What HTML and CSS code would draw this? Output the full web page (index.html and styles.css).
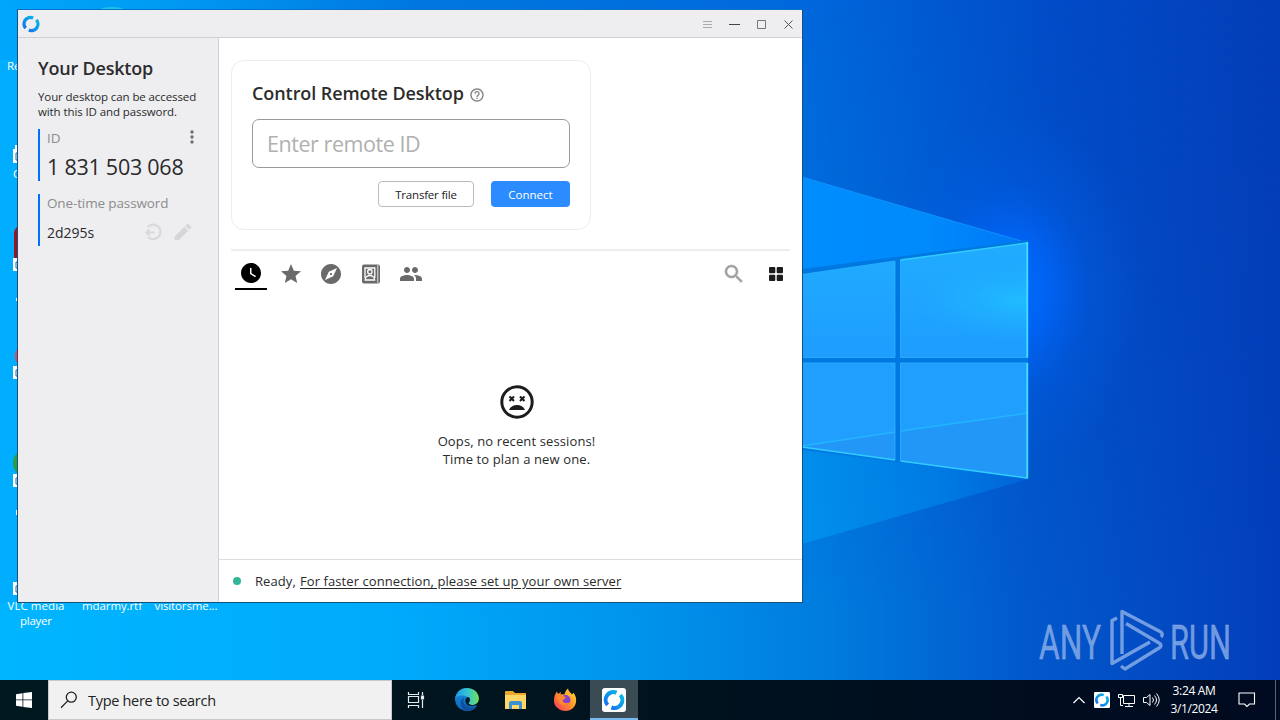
FILE: index.html
```html
<!DOCTYPE html>
<html lang="en">
<head>
<meta charset="utf-8">
<title>Desktop</title>
<link rel="stylesheet" href="styles.css">
</head>
<body>
<div class="desktop">
  <svg class="wallpaper" viewBox="0 0 1280 680" preserveAspectRatio="none">
    <defs>
      <linearGradient id="sky" x1="0" y1="0" x2="1" y2="0"><stop offset="0" stop-color="#00a6fb"/><stop offset=".12" stop-color="#009cf4"/><stop offset=".32" stop-color="#0078e0"/><stop offset=".63" stop-color="#0068dc"/><stop offset=".82" stop-color="#024cc8"/><stop offset="1" stop-color="#043eb8"/></linearGradient>
      <linearGradient id="floor" x1="0" y1="0" x2="1" y2="0"><stop offset="0" stop-color="#00b5ff"/><stop offset=".3" stop-color="#00abfc"/><stop offset=".5" stop-color="#0094ec"/><stop offset=".65" stop-color="#007bde"/><stop offset=".8" stop-color="#0259cc"/><stop offset="1" stop-color="#033eba"/></linearGradient>
      <linearGradient id="fade" x1="0" y1="0" x2="0" y2="1"><stop offset="0" stop-color="#000"/><stop offset=".3" stop-color="#333"/><stop offset=".9" stop-color="#fff"/></linearGradient>
      <mask id="low"><rect width="1280" height="680" fill="url(#fade)"/></mask>
      <radialGradient id="glow" gradientUnits="userSpaceOnUse" cx="1010" cy="290" r="180" gradientTransform="translate(1010 290) scale(.75 1) translate(-1010 -290)"><stop offset="0" stop-color="#006cff"/><stop offset=".3" stop-color="#0066fa" stop-opacity=".8"/><stop offset=".6" stop-color="#0060ec" stop-opacity=".3"/><stop offset="1" stop-color="#005ee8" stop-opacity="0"/></radialGradient>
      <linearGradient id="beam" gradientUnits="userSpaceOnUse" x1="802" y1="0" x2="1028" y2="0"><stop offset="0" stop-color="#008dfd"/><stop offset=".55" stop-color="#008afb"/><stop offset="1" stop-color="#0076f6"/></linearGradient>
      <linearGradient id="beamlow" gradientUnits="userSpaceOnUse" x1="802" y1="500" x2="1028" y2="470"><stop offset="0" stop-color="#008fec"/><stop offset=".6" stop-color="#007be3"/><stop offset="1" stop-color="#0064d8"/></linearGradient>
      <linearGradient id="pane" x1="0" y1="0" x2="0" y2="1"><stop offset="0" stop-color="#20acff"/><stop offset="1" stop-color="#1e9dff"/></linearGradient>
      <radialGradient id="shine" gradientUnits="userSpaceOnUse" cx="1020" cy="300" r="80" gradientTransform="translate(1020 300) scale(1.3 .5) translate(-1020 -300)"><stop offset="0" stop-color="#20bcff"/><stop offset="1" stop-color="#20b0ff" stop-opacity="0"/></radialGradient>
    </defs>
    <rect width="1280" height="680" fill="url(#sky)"/>
    <rect width="1280" height="680" fill="url(#floor)" mask="url(#low)"/>
    <rect width="18" height="543" y="60" fill="#00adff"/>
    <rect x="802" y="60" width="478" height="460" fill="url(#glow)"/>
    <path d="M802 177L1028 243V360H802z" fill="url(#beam)"/>
    <path d="M802 360H1028V479L802 544z" fill="url(#beamlow)"/>
    <path d="M802 177L1028 243" stroke="#159cff" stroke-opacity=".7" fill="none"/>
    <path d="M802 269L1028 240V479L802 450z" fill="#0078e2"/>
    <path d="M802 274.500L895 261V357.500H802zM900.500 260L1028 243V357.500H900.500z" fill="url(#pane)"/>
    <path d="M900.500 260L1028 243V357.500H900.500z" fill="url(#shine)"/>
    <path d="M802 363H895V460L802 447zM900.500 363H1028V478L900.500 461z" fill="#209fff"/>
    <path d="M802 446L895 432V460L802 447zM900.500 431L1028 413V478L900.500 461z" fill="#2397f7"/>
    <path d="M802 446L895 432M900.500 431L1028 413" stroke="#23b5ff" stroke-width="1.500"/>
    <path d="M802 274.500L895 261V357.500H802M900.500 357.500V260M895 363V460M802 363H895M900.500 461V363H1028M900.500 357.500H1028" fill="none" stroke="#2bb2ff" stroke-width=".8"/>
    <path d="M900.500 260L1027 243M802 447L895 460M900.500 461L1027 478" stroke="#30ccff" stroke-width="1.500"/>
    <path d="M1027.300 242V357.500M1027.300 363V478.500" stroke="#42e2ff" stroke-width="1.800"/>
    <path d="M1117 618L1112 620.500V663.500L1150 642M1161 637Q1164 634 1160 631.500L1122 611.500V654M1126 623.500L1159 643Q1163 645.500 1159 648L1125 669L1121 666" fill="none" stroke="#8fb1ea" stroke-opacity=".8" stroke-width="3.400" stroke-linejoin="round"/>
    <g class="watermark-text" fill="#8fb1ea" fill-opacity=".8" stroke="#8fb1ea" stroke-opacity=".5" stroke-width=".8">
      <text x="1039" y="659" textLength="62" lengthAdjust="spacingAndGlyphs">ANY</text>
      <text x="1170" y="659" textLength="61" lengthAdjust="spacingAndGlyphs">RUN</text>
    </g>
    <ellipse cx="112" cy="15" rx="18" ry="8" fill="#20c5df"/><ellipse cx="260" cy="14" rx="17" ry="5" fill="#438eb5"/>
    <path d="M18 226Q14 229 14 234V259H18z" fill="#9b1422"/>
    <circle cx="28" cy="356" r="13" fill="#ee4455"/><circle cx="27" cy="463" r="14" fill="#2c9d45"/>
    <g fill="#fff"><path d="M13 149H18V163H13zM13 258H18V271H13zM13 366H18V379H13zM13 474H18V487H13zM13 582H18V595H13z"/><path d="M16 298h2v3h-2zM16 510h2v5h-2zM15 145h3v4h-3z"/></g>
    <path d="M18 153h-2v7h2M18 262h-2v6h2M18 370h-2v6h2M18 478h-2v6h2M18 586h-2v6h2" fill="none" stroke="#236aa3"/>
    <g class="icon-label" fill="#fff">
      <text x="7" y="70">Re</text><text x="13" y="178">C</text>
      <text x="36" y="610" text-anchor="middle" textLength="57">VLC media</text><text x="36" y="625" text-anchor="middle" textLength="32">player</text>
      <text x="112" y="610" text-anchor="middle" textLength="60">mdarmy.rtf</text><text x="186" y="610" text-anchor="middle" textLength="63">visitorsme...</text>
    </g>
  </svg>

  <div class="window">
    <header class="titlebar">
      <svg class="app-logo" viewBox="0 0 24 24"><use href="#ring"/></svg>
      <svg class="caption" viewBox="0 0 100 28" fill="none" stroke="#777">
        <path d="M5 11.500h9M5 14.500h9M5 17.500h9" stroke="#aaa"/><path d="M31 14.500h11" stroke="#444"/><path d="M59.500 10.500h8v8h-8z" stroke="#777"/><path d="M86.500 10.500l8 8M94.500 10.500l-8 8" stroke="#555"/>
      </svg>
    </header>
    <div class="body">
      <aside class="sidebar">
        <h2 class="heading side-heading">Your Desktop</h2>
        <p class="hint">Your desktop can be accessed<br>with this ID and password.</p>
        <section class="field">
          <div class="field-head"><span class="label">ID</span><svg class="more" viewBox="0 0 6 16" fill="#707070"><circle cx="3" cy="3" r="1.700"/><circle cx="3" cy="8" r="1.700"/><circle cx="3" cy="13" r="1.700"/></svg></div>
          <div class="id-value">1 831 503 068</div>
        </section>
        <section class="field">
          <div class="field-head"><span class="label">One-time password</span></div>
          <div class="password"><span class="pw-text">2d295s</span>
            <svg class="tool" viewBox="0 0 20 20"><path d="M4.500 5.300A7.300 7.300 0 1 1 5 15M3.500 10.500H11.500M6.500 7.500l-3 3 3 3" fill="none" stroke="#d9d9dc" stroke-width="2.200"/></svg>
            <svg class="tool" viewBox="0 0 24 24" fill="#d6d6d9"><path d="M2 17.250V22h4.750L18.310 10.440l-4.750-4.750zM21.710 7.040c.39-.39.39-1.020 0-1.410l-3.340-3.340c-.39-.39-1.020-.39-1.410 0l-2.330 2.330 4.750 4.750z"/></svg>
          </div>
        </section>
      </aside>
      <main class="main">
        <div class="content">
          <section class="card">
            <h2 class="heading card-heading"><span>Control Remote Desktop</span><svg class="help" viewBox="0 0 24 24" fill="#808080"><path d="M11 18h2v-2h-2v2zm1-16C6.480 2 2 6.480 2 12s4.480 10 10 10 10-4.480 10-10S17.520 2 12 2zm0 18c-4.410 0-8-3.590-8-8s3.590-8 8-8 8 3.590 8 8-3.590 8-8 8zm0-14c-2.210 0-4 1.790-4 4h2c0-1.100.9-2 2-2s2 .9 2 2c0 2-3 1.750-3 5h2c0-2.250 3-2.500 3-5 0-2.210-1.790-4-4-4z"/></svg></h2>
            <div class="input"><span>Enter remote ID</span></div>
            <div class="actions"><button class="btn transfer">Transfer file</button><button class="btn connect">Connect</button></div>
          </section>
          <nav class="tabs">
            <span class="tab active"><svg viewBox="0 0 24 24"><path d="M12 2C6.500 2 2 6.500 2 12s4.500 10 10 10 10-4.500 10-10S17.500 2 12 2zm4.200 14.200L11 13V7h1.500v5.200l4.500 2.700-.8 1.300z"/></svg></span>
            <span class="tab"><svg viewBox="0 0 24 24"><path d="M12 17.270L18.180 21l-1.640-7.030L22 9.240l-7.190-.61L12 2 9.190 8.630 2 9.240l5.460 4.730L5.820 21z"/></svg></span>
            <span class="tab"><svg viewBox="0 0 24 24"><path d="M12 10.900c-.61 0-1.100.49-1.100 1.100s.49 1.100 1.100 1.100c.61 0 1.100-.49 1.100-1.100s-.49-1.100-1.100-1.100zM12 2C6.480 2 2 6.480 2 12s4.480 10 10 10 10-4.480 10-10S17.520 2 12 2zm2.190 12.190L6 18l3.810-8.190L18 6l-3.810 8.190z"/></svg></span>
            <span class="tab"><svg viewBox="0 0 24 24"><rect x="3" y="2.500" width="18" height="19" rx="2"/><path d="M18.800 3v18" stroke="#fff" stroke-width=".8"/><g fill="none" stroke="#fff" stroke-width="1.300"><path d="M6 16V6h9.800v10"/><circle cx="10.900" cy="9.700" r="2.200"/><path d="M6.200 18c0-6 9.400-6 9.400 0z"/></g></svg></span>
            <span class="tab"><svg viewBox="0 0 24 24"><path d="M16 11c1.660 0 2.990-1.340 2.990-3S17.660 5 16 5c-1.660 0-3 1.340-3 3s1.340 3 3 3zm-8 0c1.660 0 2.990-1.340 2.990-3S9.660 5 8 5C6.340 5 5 6.340 5 8s1.340 3 3 3zm0 2c-2.330 0-7 1.170-7 3.500V19h14v-2.500c0-2.330-4.670-3.500-7-3.500zm8 0c-.29 0-.62.020-.97.050 1.160.84 1.970 1.970 1.970 3.450V19h6v-2.500c0-2.330-4.670-3.500-7-3.500z"/></svg></span>
            <span class="spacer"></span>
            <svg class="find" viewBox="0 0 24 24" fill="#a0a0a0" stroke="#a0a0a0" stroke-width=".5"><path d="M15.500 14h-.79l-.28-.27C15.410 12.590 16 11.110 16 9.500 16 5.910 13.090 3 9.500 3S3 5.910 3 9.500 5.910 16 9.500 16c1.610 0 3.090-.59 4.230-1.570l.27.28v.79l5 4.990L20.490 19l-4.990-5zm-6 0C7.010 14 5 11.990 5 9.500S7.010 5 9.500 5 14 7.010 14 9.500 11.990 14 9.500 14z"/></svg>
            <svg class="grid" viewBox="0 0 14 14" fill="#1c1c1c"><rect width="6.300" height="6.300" rx="1"/><rect x="7.700" width="6.300" height="6.300" rx="1"/><rect y="7.700" width="6.300" height="6.300" rx="1"/><rect x="7.700" y="7.700" width="6.300" height="6.300" rx="1"/></svg>
          </nav>
          <div class="empty">
            <svg class="face" viewBox="0 0 40 40"><circle cx="20" cy="20" r="15.200" fill="none" stroke="#1c1c1c" stroke-width="3"/><path d="M12.500 14.500l4.500 4.500m0-4.500l-4.500 4.500M23 14.500l4.500 4.500m0-4.500l-4.500 4.500" stroke="#1c1c1c" stroke-width="2.100"/><path d="M12 28c2.500-6.600 13.500-6.600 16 0z" fill="#1c1c1c"/></svg>
            <p class="empty-text">Oops, no recent sessions!<br>Time to plan a new one.</p>
          </div>
        </div>
        <footer class="status"><i class="dot"></i><span class="ready">Ready,</span><span class="link">For faster connection, please set up your own server</span></footer>
      </main>
    </div>
  </div>

  <footer class="taskbar">
    <div class="start"><svg width="16" height="16" viewBox="0 0 16 16" fill="#fff"><path d="M0 2.200L6.500 1.200V7.500H0zM7.300 1.100L16 0V7.500H7.300zM0 8.300H6.500V14.700L0 13.800zM7.300 8.300H16V16L7.300 14.900z"/></svg></div>
    <div class="search"><svg width="18" height="18" viewBox="0 0 18 18" fill="none" stroke="#222" stroke-width="1.300"><circle cx="11.300" cy="6.200" r="5"/><path d="M7.700 9.900L1 16.700"/></svg><span>Type here to search</span></div>
    <div class="apps">
      <div class="app view"><svg width="20" height="18" viewBox="0 0 20 18" fill="none" stroke="#e5e9ea" stroke-width="1.200"><path d="M2.500 1v2.500h10V1M2.500 17v-2.500h10V17M2.500 5.500h10v6h-10zM16.500 1v3M16.500 9v8"/><path d="M15.500 5h2v3h-2z" fill="#fff"/></svg></div>
      <div class="app"><svg width="26" height="26" viewBox="0 0 24 24"><defs><linearGradient id="ea" x1="0" y1="0" x2="1" y2="0"><stop stop-color="#1d9be8"/><stop offset=".55" stop-color="#36c6cf"/><stop offset="1" stop-color="#70df55"/></linearGradient><linearGradient id="eb" x1="0" y1="0" x2="0" y2="1"><stop stop-color="#1a91db"/><stop offset="1" stop-color="#0b65bd"/></linearGradient></defs><path d="M1 12A11 11 0 0 1 12 1L13.500 14.500C13.500 17 17 18 21.500 16.700A11 11 0 0 1 1 12z" fill="url(#eb)"/><path d="M1 11C2 4 7 1 12 1c7 0 11 5 11 9.500 0 4-3 6-6 6-2.500 0-4-1-3.500-2 1.700-1.400 1.400-3.900-.5-5C9 7 3 7.500 1 11z" fill="url(#ea)"/><path d="M8.500 12c0 5 6 8.500 12.500 6-4 6-12.500 5.500-14.500-1-.8-3 0-6 3-7z" fill="#104f9c"/><path d="M13.500 14.500c-.4 1.500 2 3.200 7.500 2.200-6 2.800-10.500-.2-10.500-3.700 0-2 1-3.500 2.500-3.500 2.200 0 2.300 3 .5 5z" fill="#071b2b"/></svg></div>
      <div class="app"><svg width="24" height="20" viewBox="0 0 24 20"><path d="M1 2q0-1 1-1h7l2 2h11v16H1z" fill="#e9a72c"/><path d="M1 5h21v14H1z" fill="#ffd767"/><path d="M5 19v-6q0-2 2-2h9q2 0 2 2v6h-3v-4H8v4z" fill="#3b92d2"/></svg></div>
      <div class="app"><svg width="24" height="24" viewBox="0 0 24 24"><defs><linearGradient id="ff" x1="1" y1="0" x2="0" y2="1"><stop stop-color="#ffe43b"/><stop offset=".5" stop-color="#ff9029"/><stop offset="1" stop-color="#f52b68"/></linearGradient></defs><path d="M1 13C.8 9 2 6 4 3.500L5 6l3-2-.5 2.500c1.500-.5 2.500-.3 4 0C12 4 13 2 15 .5c.3 3 3 4 4 6l1.500-1.800C24 9 24 15 21 19c-4 5-12 5-16.500 1C2 18 1.200 16 1 13z" fill="url(#ff)"/><circle cx="12.500" cy="12" r="5" fill="#8542d0"/><path d="M4 8c3-2 5-.5 7 .5 2 0 2.500 2-.5 3-1 .4-1 2 .5 3 3 1.500 4.500-.5 5.500.5C14 19 4 18 4 8z" fill="#ff862c"/></svg></div>
      <div class="app current"><svg width="24" height="24" viewBox="0 0 24 24"><defs><linearGradient id="ringfill" gradientUnits="userSpaceOnUse" x1="4" y1="20" x2="20" y2="4"><stop stop-color="#176cee"/><stop offset="1" stop-color="#08bfe5"/></linearGradient><g id="ring" fill="none" stroke="url(#ringfill)" stroke-width="4"><path d="M5.600 17A7.800 7.800 0 0 1 14.600 4.700"/><path d="M18.400 7A7.800 7.800 0 0 1 9.400 19.300"/></g></defs><rect width="24" height="24" rx="3" fill="#fff"/><use href="#ring"/></svg></div>
    </div>
    <span class="spacer"></span>
    <div class="tray">
      <svg width="14" height="16" viewBox="0 0 14 16" fill="none" stroke="#fff" stroke-width="1.200"><path d="M1.500 11L7 5.500l5.500 5.500"/></svg>
      <svg width="16" height="16" viewBox="0 0 24 24"><rect width="24" height="24" rx="2" fill="#fff"/><use href="#ring"/></svg>
      <svg width="17" height="16" viewBox="0 0 17 16" fill="none" stroke="#fff"><path d="M5.500 3.500h11v8h-11zM11 12v2M7 14.500h8M.5 2.500h4v3h-4zM2.500 6v7.500H5"/></svg>
      <svg width="17" height="16" viewBox="0 0 17 16" fill="none" stroke="#fff"><path d="M.5 5.500h3l3.500-3v11l-3.500-3h-3zM9.500 5.500q2 2.500 0 5M11.500 3.500q4 4.500 0 9M13.500 1.500q5.500 6.500 0 13"/></svg>
    </div>
    <div class="clock"><span>3:24 AM</span><span>3/1/2024</span></div>
    <svg class="notice" width="18" height="18" viewBox="0 0 18 18" fill="none" stroke="#fff" stroke-width="1.100"><path d="M1 2h15.500v11h-5L9 15.500 6.500 13H1z"/></svg>
    <i class="peek"></i>
  </footer>
</div>
</body>
</html>
```
FILE: styles.css
```css
* { box-sizing: border-box; }
body { margin: 0; width: 1280px; height: 720px; overflow: hidden; font-family: "Open Sans", "Noto Sans", sans-serif; color: #2a2a2a; }
p, h2 { margin: 0; }
span { white-space: nowrap; }
svg { flex: none; display: block; }
.spacer { flex: 1; }
.desktop { position: relative; width: 1280px; height: 720px; display: flex; flex-direction: column; }
.wallpaper { width: 1280px; height: 680px; }
.watermark-text { font: 48px "Roboto", sans-serif; }
.icon-label { font-size: 11.500px; }

.window { position: absolute; left: 17px; top: 9px; width: 786px; height: 594px; border: 1px solid #16507e; border-top-color: #0872c9; background: #fff; display: flex; flex-direction: column; }
.titlebar { height: 28px; flex: none; background: #eeeef1; border-bottom: 1px solid #d0d0d2; display: flex; align-items: center; justify-content: space-between; padding: 0 4px 0 3px; }
.app-logo { width: 20px; height: 20px; }
.caption { width: 100px; height: 28px; }
.body { flex: 1; display: flex; min-height: 0; }
.sidebar { width: 201px; background: #eeeef1; border-right: 1px solid #d0d0d2; padding: 18px 20px 0; }
.heading { font-weight: 600; font-size: 18px; letter-spacing: -.08px; color: #2c2c2c; line-height: 24px; }
.side-heading { letter-spacing: -.2px; }
.hint { font-size: 11.500px; letter-spacing: -.1px; line-height: 15px; margin-top: 9px; height: 30px; white-space: nowrap; }
.field { height: 52px; margin-top: 10px; border-left: 2px solid #0071ff; padding-left: 7px; display: flex; flex-direction: column; justify-content: space-between; }
.field + .field { margin-top: 13px; }
.field-head { display: flex; justify-content: space-between; align-items: center; height: 18px; }
.label { font-size: 13.500px; letter-spacing: -.13px; color: #8c8c8c; }
.more { width: 6px; height: 16px; margin: 0 3px 2px 0; }
.id-value { font-size: 21.500px; letter-spacing: -.25px; line-height: 28px; white-space: nowrap; }
.password { display: flex; height: 26px; align-items: center; gap: 10px; padding-bottom: 2px; }
.pw-text { font-size: 14px; width: 86px; }
.tool { width: 20px; height: 20px; }

.main { flex: 1; display: flex; flex-direction: column; min-width: 0; }
.content { flex: 1; padding: 22px 12px 0; display: flex; flex-direction: column; }
.card { width: 360px; height: 170px; border: 1px solid #ededed; border-radius: 13px; padding: 20px 20px; }
.card-heading { display: flex; align-items: center; height: 24px; gap: 5px; }
.help { width: 16px; height: 16px; margin-top: 4px; }
.input { height: 49px; margin-top: 14px; border: 1px solid #999; border-radius: 7px; padding: 0 14px; display: flex; align-items: center; color: #b0b0b0; font-size: 21.500px; letter-spacing: -.45px; }
.actions { margin-top: 13px; display: flex; justify-content: flex-end; gap: 17px; }
.btn { font-family: inherit; font-size: 11.500px; letter-spacing: -.2px; height: 26px; border-radius: 4px; padding: 0; white-space: nowrap; }
.transfer { width: 96px; background: #fff; border: 1px solid #bbb; color: #222; }
.connect { width: 79px; border: 0; background: #2c8cff; color: #fff; letter-spacing: 0; }
.tabs { margin-top: 19px; border-top: 2px solid #eee; height: 42px; display: flex; align-items: flex-end; gap: 8px; padding: 0 6px 1px 4px; }
.tab { width: 32px; height: 33px; display: flex; justify-content: center; align-items: center; padding-top: 1px; }
.tab svg { width: 24px; height: 24px; fill: #6a6a6a; }
.tab.active { border-bottom: 2px solid #000; padding: 0; }
.tab.active svg { fill: #000; }
.find { width: 24px; height: 24px; margin: 0 19px 4px 0; }
.grid { width: 14px; height: 14px; margin: 0 1px 9px -4px; }
.empty { flex: 1; display: flex; flex-direction: column; align-items: center; padding: 91px 0 0 12px; }
.face { width: 40px; height: 40px; }
.empty-text { margin-top: 10px; font-size: 13px; letter-spacing: .12px; line-height: 18px; text-align: center; }
.status { height: 43px; border-top: 1px solid #ddd; display: flex; align-items: center; padding-left: 14px; font-size: 13px; letter-spacing: .08px; }
.dot { width: 8px; height: 8px; border-radius: 50%; background: #32b598; margin-right: 14px; }
.ready { width: 45px; }
.link { text-decoration: underline; text-underline-offset: 2px; }

.taskbar { height: 40px; flex: none; display: flex; align-items: center; color: #fff; background: linear-gradient(90deg, #001820, #00131e 50%, #000a20); }
.start { width: 48px; display: flex; justify-content: center; }
.search { width: 344px; height: 40px; background: #f1f1f1; border: 1px solid #c9c9c9; display: flex; align-items: center; gap: 10px; padding-left: 11px; color: #222; font-size: 14.500px; letter-spacing: -.3px; }
.apps { display: flex; height: 40px; }
.app { width: 49px; display: flex; align-items: center; justify-content: center; padding-right: 2px; }
.view { width: 51px; padding-right: 4px; }
.current { width: 48px; background: #3b4b54; border-bottom: 2px solid #76b9ed; padding: 2px 0 0; }
.tray { display: flex; align-items: center; gap: 8px; margin-right: 9px; }
.clock { width: 50px; display: flex; flex-direction: column; align-items: center; font-size: 12px; letter-spacing: -.35px; line-height: 18px; padding-bottom: 1px; }
.notice { margin: 0 19px 0 19px; }
.peek { width: 5px; height: 40px; border-left: 1px solid #59616d; }
```
